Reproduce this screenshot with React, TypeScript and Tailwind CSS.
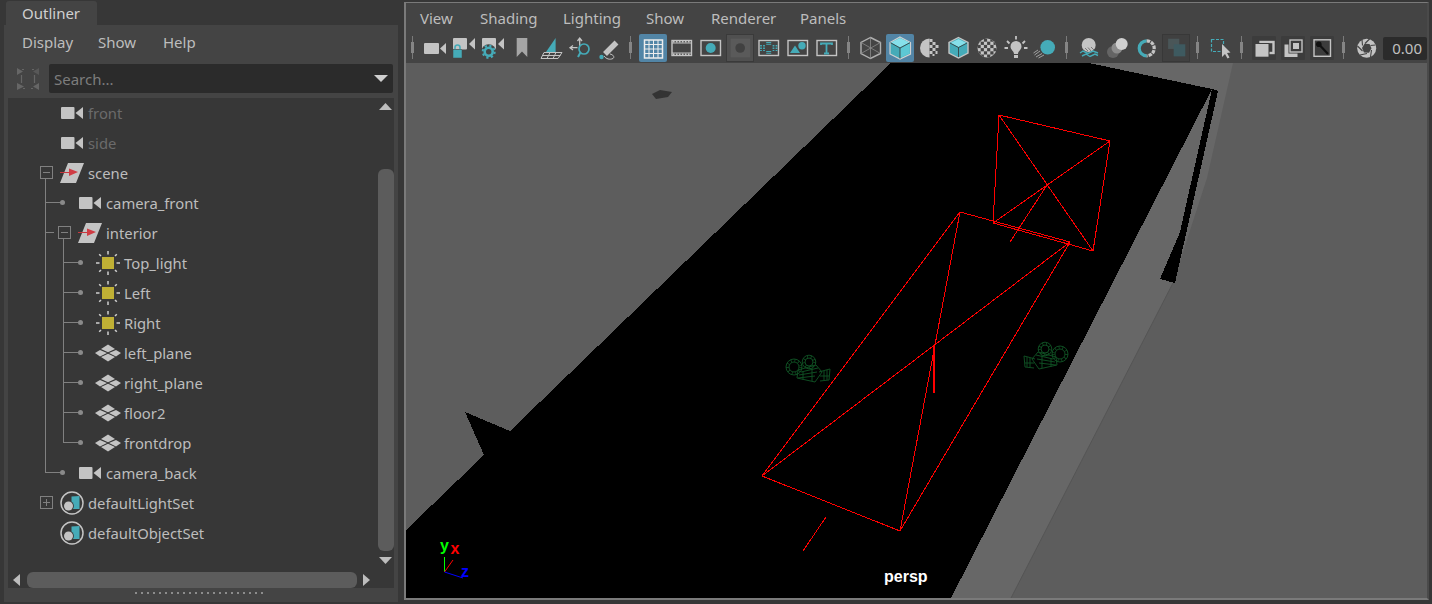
import React from "react";

const G = "#c4c4c4";
const T = "#45abb8";
const LINE = "#808080";

function Cam() {
  return (
    <svg width={24} height={24} viewBox="0 0 24 24">
      <rect x={1} y={6} width={13.5} height={12} rx={1} fill={G} />
      <polygon points="23,6 23,18 15.5,12" fill={G} />
    </svg>
  );
}
function Scene() {
  return (
    <svg width={24} height={24} viewBox="0 0 24 24">
      <polygon points="8,2 24,2 16,22 0,22" fill={G} />
      <path d="M0 11.5H12" stroke="#c8383f" strokeWidth={1} />
      <polygon points="9,7.5 18,11 9,15" fill="#d03c44" />
    </svg>
  );
}
function Light() {
  const rays = "M12 0V3.5M12 20.5V24M0 12H3.5M20.5 12H24M3.2 3.2L5 5M19 19L20.8 20.8M3.2 20.8L5 19M19 5L20.8 3.2";
  return (
    <svg width={24} height={24} viewBox="0 0 24 24">
      <path d={rays} stroke="#cfcfcf" strokeWidth={1.5} />
      <rect x={6} y={6} width={12} height={12} fill="#c0b035" />
    </svg>
  );
}
function Plane() {
  return (
    <svg width={24} height={24} viewBox="0 0 24 24" className="overflow-visible">
      <polygon points="12,3.5 19,8 12,11.3 5,8" fill={G} />
      <polygon points="4,9 11,12 4,15.5 -1,12" fill={G} />
      <polygon points="20,9 25,12 20,15.5 13,12" fill={G} />
      <polygon points="12,12.7 19,16 12,20.5 5,16" fill={G} />
    </svg>
  );
}
function SetIcon() {
  return (
    <svg width={24} height={24} viewBox="0 0 24 24">
      <circle cx={12} cy={12} r={11} fill="none" stroke={G} strokeWidth={1.5} />
      <polygon points="11.5,5.5 19.5,5 19.5,18 11.5,18" fill={T} />
      <circle cx={8.5} cy={15} r={5.4} fill="#383838" />
      <circle cx={8.5} cy={15} r={4.5} fill={G} />
    </svg>
  );
}

type G2 = { w: number; d: string; dot?: number };
function Guide({ w, d, dot }: G2) {
  return (
    <svg width={w} height={30} viewBox={`8 0 ${w} 30`} className="flex-none">
      <path d={d} stroke={LINE} strokeWidth={1} fill="none" shapeRendering="crispEdges" />
      {dot ? <circle cx={dot} cy={14.5} r={2.5} fill="#8a8a8a" /> : null}
    </svg>
  );
}

const outerV = "M45.5 0V30";
const innerV = "M63.5 0V30";
const leaf = `${outerV}${innerV}M63.5 14.5H78`;
const rows: { name: string; icon: React.ReactNode; w: number; d: string; dot?: number; dim?: boolean }[] = [
  { name: "front", icon: <Cam />, w: 52, d: "", dim: true },
  { name: "side", icon: <Cam />, w: 52, d: "", dim: true },
  { name: "scene", icon: <Scene />, w: 52, d: "M40.5 8.5H52.5V20.5H40.5ZM43 14.5H50M45.5 21V30" },
  { name: "camera_front", icon: <Cam />, w: 70, d: `${outerV}M45.5 14.5H60`, dot: 62.5 },
  { name: "interior", icon: <Scene />, w: 70, d: `${outerV}M45.5 14.5H54M58.5 8.5H70.5V20.5H58.5ZM61 14.5H68M63.5 21V30` },
  { name: "Top_light", icon: <Light />, w: 88, d: leaf, dot: 80.5 },
  { name: "Left", icon: <Light />, w: 88, d: leaf, dot: 80.5 },
  { name: "Right", icon: <Light />, w: 88, d: leaf, dot: 80.5 },
  { name: "left_plane", icon: <Plane />, w: 88, d: leaf, dot: 80.5 },
  { name: "right_plane", icon: <Plane />, w: 88, d: leaf, dot: 80.5 },
  { name: "floor2", icon: <Plane />, w: 88, d: leaf, dot: 80.5 },
  { name: "frontdrop", icon: <Plane />, w: 88, d: `${outerV}M63.5 0V14.5H78`, dot: 80.5 },
  { name: "camera_back", icon: <Cam />, w: 70, d: "M45.5 0V14.5H60", dot: 62.5 },
  { name: "defaultLightSet", icon: <SetIcon />, w: 52, d: "M40.5 8.5H52.5V20.5H40.5ZM43 14.5H50M46.5 11V18" },
  { name: "defaultObjectSet", icon: <SetIcon />, w: 52, d: "" },
];

function Arrow({ dir, w, h, fill }: { dir: "u" | "d" | "l" | "r"; w: number; h: number; fill: string }) {
  const pts = {
    u: `0,${h} ${w},${h} ${w / 2},0`,
    d: `0,0 ${w},0 ${w / 2},${h}`,
    l: `${w},0 ${w},${h} 0,${h / 2}`,
    r: `0,0 0,${h} ${w},${h / 2}`,
  }[dir];
  return (
    <svg width={w} height={h} className="flex-none">
      <polygon points={pts} fill={fill} />
    </svg>
  );
}

function Outliner() {
  return (
    <div className="flex-none w-[404px] pl-[4px] pt-[1px] flex flex-col">
      <div className="ml-[2px] w-[91px] h-[24px] bg-[#444444] rounded-t-[3px] pl-[16px] flex items-center text-[15px] text-[#d0d0d0]">
        Outliner
      </div>
      <div className="w-[394px] h-[577px] bg-[#444444] flex flex-col">
        <div className="h-[39px] flex-none pl-[18px] pb-[4px] flex items-center text-[15px] text-[#bdbdbd]">
          <span className="w-[76px]">Display</span>
          <span className="w-[65px]">Show</span>
          <span>Help</span>
        </div>
        <div className="h-[29px] flex-none flex items-center pl-[13px]">
          <svg width={22} height={22} viewBox="0 0 22 22" className="flex-none">
            <path d="M5 1.5H7M15 1.5H17M4.5 7V15M17.5 7V15M6 20.5H8M14 20.5H16" stroke="#666" strokeWidth={1.2} />
            <polygon points="0,0 6,3.5 0,7" fill="#666" />
            <polygon points="22,0 16,3.5 22,7" fill="#666" opacity={0.6} />
            <polygon points="0,15 7,18.5 0,22" fill="#666" />
            <polygon points="22,15 16,18.5 22,22" fill="#666" />
          </svg>
          <div className="ml-[10px] w-[344px] h-[29px] bg-[#2b2b2b] rounded-[2px] flex items-center justify-between pl-[5px] pr-[5px] text-[15px] text-[#7d7d7d]">
            <span className="pt-[1px]">Search...</span>
            <Arrow dir="d" w={14} h={7} fill="#cfcfcf" />
          </div>
        </div>
        <div className="mt-[5px] mx-[4px] h-[490px] flex-none bg-[#373737] flex flex-col">
          <div className="flex-1 flex min-h-0">
            <div className="flex-1 min-w-0">
              {rows.map((r) => (
                <div key={r.name} className="h-[30px] flex items-center">
                  <Guide w={r.w} d={r.d} dot={r.dot} />
                  <span className="flex-none w-[24px] h-[24px]">{r.icon}</span>
                  <span className={`ml-[4px] text-[14.8px] ${r.dim ? "text-[#6b6b6b]" : "text-[#bdbdbd]"}`}>{r.name}</span>
                </div>
              ))}
            </div>
            <div className="flex-none w-[16px] flex flex-col pl-[1px] pt-[5px]">
              <Arrow dir="u" w={13} h={7} fill="#bdbdbd" />
              <div className="mt-[59px] -ml-[1px] w-[16px] h-[382px] bg-[#5c5c5c] rounded-[6px]" />
              <div className="mt-[6px]">
                <Arrow dir="d" w={13} h={7} fill="#bdbdbd" />
              </div>
            </div>
          </div>
          <div className="h-[16px] flex-none flex items-center pl-[5px]">
            <Arrow dir="l" w={7} h={12} fill="#bdbdbd" />
            <div className="ml-[7px] w-[330px] h-[16px] bg-[#5c5c5c] rounded-[6px]" />
            <div className="ml-[6px] flex">
              <Arrow dir="r" w={7} h={12} fill="#bdbdbd" />
            </div>
          </div>
        </div>
        <div className="mt-[4px] ml-[131px] flex gap-[4px]">
          {Array.from({ length: 22 }, (_, i) => (
            <span key={i} className="w-[2px] h-[2px] bg-[#8c8c8c]" />
          ))}
        </div>
      </div>
    </div>
  );
}

function Sep({ first }: { first?: boolean }) {
  return (
    <svg width={first ? 14 : 15} height={30} viewBox={first ? "1 0 14 30" : "0 0 15 30"} className="flex-none">
      <path d="M7.5 3V26" stroke="#7a7a7a" strokeWidth={1} />
      <rect x={6} y={9} width={3} height={11} fill="#858585" />
    </svg>
  );
}

function Tool({ tone, children }: { tone?: "active" | "dark" | "xray" | "box"; children: React.ReactNode }) {
  if (!tone) {
    return (
      <svg width={29} height={30} viewBox="0 0 29 30" className="flex-none">
        {children}
      </svg>
    );
  }
  const cls = {
    active: "bg-[#5285a6] rounded-[2px]",
    dark: "bg-[#505050] border border-[#3a3a3a]",
    xray: "bg-[#404040] border border-[#383838]",
    box: "bg-[#3c3c3c] rounded-[1px]",
  }[tone];
  const size = tone === "box" ? 24 : 28;
  const vb = tone === "box" ? "2.5 3 24 24" : "0.5 1 28 28";
  return (
    <span className="w-[29px] h-[30px] flex-none flex items-center justify-center">
      <svg width={size} height={size} viewBox={vb} className={`${cls} box-border`}>
        {children}
      </svg>
    </span>
  );
}

const Frame = () => <rect x={5} y={7.5} width={19.5} height={15} fill="none" stroke={G} strokeWidth={1.4} />;

function checkerCells(cx: number, cy: number, r: number, size: number, fill: string, id: string) {
  const cells: React.ReactNode[] = [];
  for (let i = 0; i < 6; i++) {
    for (let j = 0; j < 6; j++) {
      if ((i + j) % 2 === 0) {
        cells.push(<rect key={`${i}-${j}`} x={cx - r + i * size} y={cy - r + j * size} width={size} height={size} fill={fill} />);
      }
    }
  }
  return (
    <>
      <clipPath id={id}>
        <circle cx={cx} cy={cy} r={r} />
      </clipPath>
      <g clipPath={`url(#${id})`}>{cells}</g>
    </>
  );
}

function Toolbar() {
  return (
    <div className="h-[30px] flex-none flex items-center bg-[#444444]">
      <Sep first />
      <Tool>
        <rect x={4} y={10} width={15} height={11} rx={1} fill={G} />
        <polygon points="26,10 26,21 20,15.5" fill={G} />
      </Tool>
      <Tool>
        <rect x={4} y={5} width={14} height={11.5} rx={1} fill={G} />
        <polygon points="26,5 26,16.5 20,11" fill={G} />
        <path d="M6 17V14.5a2.5 2.5 0 0 1 5 0V17" fill="none" stroke={T} strokeWidth={1.6} />
        <rect x={4} y={16.5} width={9} height={8.5} rx={0.5} fill={T} stroke="#444" strokeWidth={0.5} />
      </Tool>
      <Tool>
        <rect x={4} y={5} width={14} height={11.5} rx={1} fill={G} />
        <polygon points="26,5 26,16.5 20,11" fill={G} />
        <circle cx={10.7} cy={18.7} r={7.5} fill="#444" />
        <circle cx={10.7} cy={18.7} r={4} fill="none" stroke={T} strokeWidth={2.6} />
        <circle cx={10.7} cy={18.7} r={6} fill="none" stroke={T} strokeWidth={2} strokeDasharray="2.2 2.5" />
      </Tool>
      <Tool>
        <polygon points="9.7,5 20.3,5 20.3,24 15,18.5 9.7,24" fill="#a6a6a6" />
      </Tool>
      <Tool>
        <polygon points="19.6,5 19.6,19 10,19" fill={T} />
        <path d="M8 19.5H26M6.5 22.5H24.5M5 25.5H22M8 19.5L5 25.5M14 19.5L11 25.5M20 19.5L17 25.5M26 19.5L22 25.5" stroke={G} strokeWidth={1} fill="none" />
      </Tool>
      <Tool>
        <path d="M14.7 13V6M12.5 8L14.7 5L17 8M12.5 14.7H6M8 12.5L5 14.7L8 17" stroke={G} strokeWidth={1.3} fill="none" />
        <circle cx={19} cy={16} r={5} fill="none" stroke={T} strokeWidth={1.7} />
        <path d="M15.5 19.5L13 24" stroke={T} strokeWidth={2} />
      </Tool>
      <Tool>
        <path d="M22.5 9.5L11 21" stroke={G} strokeWidth={5.5} />
        <circle cx={7.5} cy={24} r={2.2} fill={T} />
        <path d="M10 23C12 26 16 27 19 25.5C21 24 19 21.5 16 21" stroke={G} strokeWidth={1} fill="none" />
      </Tool>
      <Sep />
      <Tool tone="active">
        <rect x={6} y={7} width={18} height={18} fill="none" stroke="#ededed" strokeWidth={1.5} />
        <path d="M10.5 7V25M15 7V25M19.5 7V25M6 11.5H24M6 16H24M6 20.5H24" stroke="#ededed" strokeWidth={1} />
      </Tool>
      <Tool>
        <Frame />
        <path d="M5 10H24.5M5 20H24.5" stroke={G} strokeWidth={1} />
        <path d="M6 8.7H24M6 21.3H24" stroke={G} strokeWidth={1.4} strokeDasharray="1.5 1.5" />
      </Tool>
      <Tool>
        <Frame />
        <circle cx={14.7} cy={15} r={5} fill={T} />
      </Tool>
      <Tool tone="dark">
        <rect x={4.5} y={5} width={21} height={20} fill="#5a5a5a" />
        <circle cx={14.7} cy={15} r={5.2} fill="#414141" />
      </Tool>
      <Tool>
        <Frame />
        <path d="M14.7 9V12M14.7 18V21" stroke={T} strokeWidth={5} strokeDasharray="1.2 1" />
        <path d="M7 12V18M10 12V18M19.5 12V18M22.5 12V18" stroke={T} strokeWidth={1.8} strokeDasharray="1.5 1" />
      </Tool>
      <Tool>
        <Frame />
        <polygon points="12,12.5 17,20 7,20" fill={T} />
        <circle cx={19} cy={12.7} r={3.7} fill={T} />
      </Tool>
      <Tool>
        <Frame />
        <path d="M9 12V10.5H20V12M14.5 10.5V20M12 20.5H17" stroke={T} strokeWidth={1.8} fill="none" />
      </Tool>
      <Sep />
      <Tool>
        <polygon points="14.5,4.5 24.5,9.5 24.5,20.5 14.5,25.5 5,20.5 5,9.5" fill="none" stroke="#b0b0b0" strokeWidth={1.4} />
        <path d="M14.5 4.5V25.5M5 9.5L24.5 20.5M24.5 9.5L5 20.5" stroke="#8a8a8a" strokeWidth={0.8} />
      </Tool>
      <Tool tone="active">
        <polygon points="14.5,4 25,9.5 25,21 14.5,26 4.5,21 4.5,9.5" fill={T} stroke="#d0d0d0" strokeWidth={1.2} />
        <polygon points="14.5,5 24,9.5 14.5,14.5 5.5,9.5" fill="#86e0ea" />
        <polygon points="14.5,15 24.2,10 24.2,20.5 14.5,25" fill="#5dc8d4" />
        <path d="M14.5 15V25.5M14.5 15L5 9.7M14.5 15L24.5 9.7" stroke="#333" strokeWidth={0.8} />
      </Tool>
      <Tool>
        <circle cx={15.5} cy={15} r={9.5} fill="#444" />
        <path d="M15.5 5.5A9.5 9.5 0 0 0 15.5 24.5Z" fill={G} />
        {[
          [15.5, 6, 3, 3],
          [18.5, 9, 3, 3],
          [15.5, 12, 3, 3],
          [21.5, 12, 3, 3],
          [18.5, 15, 3, 3],
          [15.5, 18, 3, 3],
          [21.5, 18, 2, 3],
          [18.5, 21, 2, 2],
        ].map(([x, y, w, h]) => (
          <rect key={`${x}-${y}`} x={x} y={y} width={w} height={h} fill={G} />
        ))}
      </Tool>
      <Tool>
        <polygon points="15.5,4.5 25,9.5 25,20 15.5,25 6,20 6,9.5" fill={T} stroke={G} strokeWidth={1.4} />
        <polygon points="15.5,6 23.5,10 15.5,14 7.5,10" fill="#86e0ea" />
        <path d="M15.5 14.5V24M7 10L15.5 14.5L24 10" stroke="#333" strokeWidth={0.8} fill="none" />
      </Tool>
      <Tool>
        <circle cx={15} cy={15} r={9.5} fill={G} />
        {checkerCells(15, 15, 9.5, 3.2, "#444", "chk")}
      </Tool>
      <Tool>
        <path d="M15 3V6.5M6 8L8.5 10.5M24 8L21.5 10.5M3.5 15H7M23 15H26.5" stroke={G} strokeWidth={1.8} />
        <path d="M13 21C13 18 9.5 17 9.5 13.5a5.5 5.5 0 0 1 11 0C20.5 17 17 18 17 21Z" fill={G} />
        <rect x={13} y={22} width={4} height={3} fill={G} />
      </Tool>
      <Tool>
        <path d="M3.5 20L8 17M4.5 22L10 18M6 24L12 20.5M8.5 25L14 22" stroke="#a0a0a0" strokeWidth={1} />
        <circle cx={17.7} cy={14.3} r={7.3} fill={T} />
      </Tool>
      <Sep />
      <Tool>
        <circle cx={14.7} cy={12} r={7} fill={G} />
        <path d="M11 15L14 18M14 14.5L17 18M17 14L20 17" stroke="#777" strokeWidth={1} />
        <path d="M6 20L9 18L14 20.5L19 18L24 20M8 23L12 21L16 23.5L21 21L24 22.5" stroke={T} strokeWidth={1.4} fill="none" />
      </Tool>
      <Tool>
        <circle cx={10} cy={19} r={6} fill="#646464" />
        <circle cx={14} cy={15} r={5.5} fill="#8c8c8c" />
        <circle cx={18.7} cy={11} r={6} fill="#d0d0d0" />
      </Tool>
      <Tool>
        <path d="M14.7 7.8A7.5 7.5 0 0 0 14.7 22.8" fill="none" stroke={T} strokeWidth={3.2} />
        <path d="M14.7 7.8A7.5 7.5 0 0 1 14.7 22.8" fill="none" stroke={G} strokeWidth={3.2} strokeDasharray="3.5 1" />
      </Tool>
      <Tool tone="xray">
        <rect x={6} y={5} width={12} height={11} fill="#4a5658" />
        <rect x={12} y={11} width={12.5} height={13} fill="#3e5a60" />
      </Tool>
      <Sep />
      <Tool>
        <rect x={6.5} y={6.5} width={12} height={12} fill="none" stroke={T} strokeWidth={1.2} strokeDasharray="3 1.5" />
        <polygon points="17,11 25.5,19.5 22,20 24.5,24.5 22.5,25.5 20,21 17,24" fill={G} />
      </Tool>
      <Sep />
      <Tool tone="box">
        <rect x={11} y={9} width={13} height={11} fill="none" stroke={G} strokeWidth={2.4} />
        <rect x={5} y={10} width={15} height={14.5} fill="#3c3c3c" />
        <rect x={6} y={11} width={13} height={12.7} fill={G} />
      </Tool>
      <Tool tone="box">
        <rect x={11.5} y={7} width={12} height={12} fill="none" stroke={G} strokeWidth={1.4} />
        <rect x={14.5} y={10} width={6} height={6} fill={G} />
        <path d="M6 11.5H10V20.5H19V24H6Z" fill={G} />
      </Tool>
      <Tool tone="box">
        <rect x={6.5} y={6.8} width={16.5} height={16.5} fill="none" stroke={G} strokeWidth={1.4} />
        <circle cx={11.3} cy={11.3} r={2.8} fill="#111" />
        <path d="M12.5 12.5L20.5 21" stroke="#111" strokeWidth={2.2} />
      </Tool>
      <Sep />
      <Tool>
        <circle cx={15.7} cy={15.3} r={9.5} fill={G} />
        <path d="M14 10.5L19 5.5M19.5 12.5L24.5 12M20.5 17L19.5 24M16 20.5L9 22M11.5 18L6.5 13M11.5 12.5L11 6.5" stroke="#444" strokeWidth={1.1} />
        <polygon points="13.5,10.8 18.5,11 20.5,15.3 18,19.8 13,19.5 11,15" fill="#444" />
      </Tool>
      <div className="ml-[3px] w-[44px] h-[23px] flex-none bg-[#2b2b2b] rounded-[2px] flex items-center justify-end pr-[5px] text-[15px] text-[#c0c0c0]">
        0.00
      </div>
    </div>
  );
}

function GreenCam({ tf }: { tf?: string }) {
  return (
    <g transform={tf} fill="none" stroke="#0f4d22" strokeWidth={1}>
      <circle cx={794} cy={367} r={8} />
      <circle cx={794} cy={367} r={5} />
      <circle cx={794} cy={367} r={6.5} strokeWidth={3} strokeDasharray="0.8 3" />
      <circle cx={809} cy={362} r={6.8} />
      <circle cx={809} cy={362} r={4} />
      <circle cx={809} cy={362} r={5.4} strokeWidth={2.8} strokeDasharray="0.8 3" />
      <path d="M798 370L816 365L822 372L815 382L797 378ZM801 372L818 368M799 375L817 372M798 378L815 376M803 371V380M812 368V381" />
      <path d="M819 372L826 370L830 369L829 380L820 381M824 371V380M827 370V380M820 376H829" />
    </g>
  );
}

function Scene3D() {
  return (
    <svg viewBox="406 63 1021 535" width={1021} height={535} className="block flex-none">
      <rect x={406} y={63} width={1021} height={535} fill="#5d5d5d" />
      <polygon points="1089,63 1233,63 1207,178 1173,283 1011,598 951,598 1212,89" fill="#676767" />
      <path d="M1173 283L1011 598" stroke="#555" strokeWidth={1} fill="none" />
      <polygon
        points="891,63 1089,63 1212,89 951,598 406,598 406,530 484,455 465,412 510,431"
        fill="#000"
        shapeRendering="crispEdges"
      />
      <polygon points="1212,89 1218,91 1175,283 1160,279 1180,232" fill="#000" shapeRendering="crispEdges" />
      <polygon points="652,94 660,90 672,92 668,97 656,99" fill="#333" />
      <g stroke="#f00" strokeWidth={1} fill="none" shapeRendering="crispEdges">
        <path d="M999 115L1110 141L1093 251L993 223ZM999 115L1093 251M1110 141L993 223M1047 185L1010 242" />
        <path d="M960 212L1070 242L900 531L762 476ZM960 212L900 531M1070 242L762 476" />
        <path d="M826 517L803 551" />
      </g>
      <path d="M934 346L934.5 393" stroke="#f00" strokeWidth={2} shapeRendering="crispEdges" />
      <GreenCam />
      <GreenCam tf="translate(1854,-13) scale(-1,1)" />
      <path d="M444.5 572V557" stroke="#0f0" strokeWidth={1} />
      <path d="M444.5 572L453 560" stroke="#f00" strokeWidth={1} />
      <path d="M444.5 572L463 578" stroke="#00f" strokeWidth={1} />
      <g fontFamily="'Liberation Sans', sans-serif" fontWeight="bold" fontSize={16}>
        <text x={440} y={551} fill="#0f0">y</text>
        <text x={450.5} y={554} fill="#f00">x</text>
        <text x={461} y={577} fill="#00f">z</text>
        <text x={884} y={582} fill="#fff">persp</text>
      </g>
    </svg>
  );
}

function Viewport() {
  return (
    <div className="flex-none w-[1025px] h-[598px] mt-[2px] border-2 border-t border-[#7a7a7a] border-r-[#4a4a4a] bg-[#444444] flex flex-col box-border">
      <div className="h-[30px] flex-none pl-[14px] flex items-center text-[15px] text-[#bdbdbd]">
        <span className="w-[60px]">View</span>
        <span className="w-[83px]">Shading</span>
        <span className="w-[83px]">Lighting</span>
        <span className="w-[65px]">Show</span>
        <span className="w-[89px]">Renderer</span>
        <span>Panels</span>
      </div>
      <Toolbar />
      <Scene3D />
    </div>
  );
}

export default function App() {
  return (
    <div className="w-[1432px] h-[604px] overflow-hidden flex bg-[#373737] font-['Noto_Sans',sans-serif]">
      <Outliner />
      <Viewport />
    </div>
  );
}
